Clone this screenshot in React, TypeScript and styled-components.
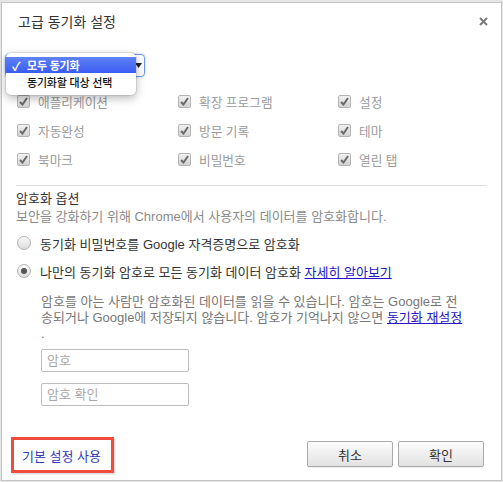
import styled, { createGlobalStyle } from 'styled-components'

const GlobalStyle = createGlobalStyle`
  html, body {
    margin: 0;
    padding: 0;
    background: #e4e4e4;
  }
  body {
    font-family: 'Liberation Sans', 'Noto Sans CJK KR', sans-serif;
    font-size: 13px;
    color: #333;
  }
`

const Frame = styled.div`
  width: 503px;
  height: 482px;
  box-sizing: border-box;
  padding: 2px 1px 1px 1px;
`

const Dialog = styled.div`
  height: 100%;
  box-sizing: border-box;
  background: #fff;
  border: 1px solid #c4c4c4;
  display: flex;
  flex-direction: column;
`

const Header = styled.div`
  display: flex;
  justify-content: space-between;
  align-items: flex-start;
  padding: 10px 12px 0 16px;
`

const Title = styled.h1`
  margin: 0;
  font-size: 14px;
  font-weight: normal;
  line-height: 18px;
  color: #333;
`

const Close = styled.button`
  border: none;
  background: none;
  padding: 0;
  margin-top: 2px;
  width: 12px;
  height: 12px;
  display: flex;
  align-items: center;
  justify-content: center;
`

const SelectRow = styled.div`
  position: relative;
  margin: 23px 0 0 3px;
  width: 140px;
  height: 23px;
`

const SelectBox = styled.div`
  box-sizing: border-box;
  height: 100%;
  border: 1px solid #6d9be6;
  border-radius: 4px;
  box-shadow: 0 0 2px #8fb4ee;
  display: flex;
  justify-content: flex-end;
  align-items: center;
  padding-right: 2px;
`

const Popup = styled.ul`
  position: absolute;
  left: 1px;
  top: -1px;
  width: 130px;
  margin: 0;
  padding: 4px 0;
  list-style: none;
  background: #fff;
  border-radius: 5px;
  box-shadow: 0 3px 10px rgba(0, 0, 0, 0.3), 0 0 0 1px rgba(0, 0, 0, 0.08);
`

const PopupItem = styled.li<{ $active?: boolean }>`
  display: flex;
  align-items: center;
  height: ${p => (p.$active ? 16 : 18)}px;
  padding-left: 6px;
  font-size: 11px;
  letter-spacing: -0.2px;
  font-weight: ${p => (p.$active ? 'bold' : 500)};
  color: ${p => (p.$active ? '#fff' : '#111')};
  background: ${p => (p.$active ? 'linear-gradient(#5f82f7, #3a5bf0)' : 'transparent')};
`

const Tick = styled.span`
  width: 15px;
  font-size: 12px;
`

const CheckGrid = styled.div`
  display: grid;
  grid-template-columns: 161px 160px 1fr;
  grid-auto-rows: 29px;
  margin-top: 10px;
  padding-left: 15px;
`

const CheckItem = styled.label`
  display: flex;
  align-items: center;
  gap: 8px;
  color: #9a9a9a;
  font-size: 12.7px;
`

const CheckBox = styled.span`
  box-sizing: border-box;
  width: 13px;
  height: 13px;
  border: 1px solid #b4b4b4;
  border-radius: 2px;
  background: linear-gradient(#f2f2f2, #d2d2d2);
  display: flex;
  align-items: center;
  justify-content: center;
`

const Divider = styled.hr`
  margin: 11px 14px 0 14px;
  border: none;
  border-top: 1px solid #dcdcdc;
  height: 0;
`

const Section = styled.div`
  padding: 4px 0 0 14px;
`

const Heading = styled.div`
  line-height: 18px;
  color: #333;
`

const Desc = styled.div`
  line-height: 18px;
  color: #8a8a8a;
`

const RadioList = styled.div`
  display: flex;
  flex-direction: column;
  gap: 2px;
  margin-top: 4px;
`

const RadioRow = styled.label`
  display: flex;
  align-items: center;
  gap: 9px;
  height: 26px;
  padding-left: 1px;
  color: #333;
`

const RadioDot = styled.span<{ $on?: boolean }>`
  box-sizing: border-box;
  width: 14px;
  height: 14px;
  border-radius: 50%;
  border: 1px solid #b2b2b2;
  background: linear-gradient(#fafafa, #dcdcdc);
  display: flex;
  align-items: center;
  justify-content: center;

  &::after {
    content: '';
    display: ${p => (p.$on ? 'block' : 'none')};
    width: 6px;
    height: 6px;
    border-radius: 50%;
    background: #555;
  }
`

const Link = styled.a`
  color: #2416c8;
  text-decoration: underline;
  cursor: pointer;
`

const Nested = styled.div`
  padding-left: 25px;
`

const Paragraph = styled.p`
  margin: 10px 0 0;
  line-height: 16px;
  color: #777;
`

const Field = styled.input`
  display: block;
  box-sizing: border-box;
  width: 148px;
  height: 23px;
  margin-top: 11px;
  padding: 0 5px;
  border: 1px solid #bdbdbd;
  border-radius: 2px;
  font: inherit;
  color: #333;

  &:first-of-type {
    margin-top: 7px;
  }

  &::placeholder {
    color: #a8a8a8;
  }
`

const Footer = styled.div`
  margin-top: auto;
  display: flex;
  justify-content: space-between;
  align-items: center;
  padding: 0 17px 9px 9px;
`

const DefaultsLink = styled.a`
  box-sizing: border-box;
  width: 103px;
  height: 36px;
  display: flex;
  align-items: center;
  padding-left: 8px;
  border: 3px solid #f04b3c;
  box-shadow: 1px 1px 2px rgba(0, 0, 0, 0.2);
  color: #2f39b6;
  margin-bottom: -2px;
`

const Buttons = styled.div`
  display: flex;
  gap: 5px;
`

const Button = styled.button`
  width: 86px;
  height: 26px;
  border: 1px solid #a9a9a9;
  border-radius: 2px;
  background: linear-gradient(#fcfcfc, #e2e2e2);
  box-shadow: 0 1px 0 rgba(0, 0, 0, 0.06);
  font: inherit;
  color: #333;
`

const checks = [
  '애플리케이션', '확장 프로그램', '설정',
  '자동완성', '방문 기록', '테마',
  '북마크', '비밀번호', '열린 탭'
]

function CheckIcon () {
  return (
    <svg width="9" height="9" viewBox="0 0 9 9">
      <path d="M1 5 L3.5 7.5 L8 1" fill="none" stroke="#6a6a6a" strokeWidth="2" />
    </svg>
  )
}

export default function App () {
  return (
    <>
      <GlobalStyle />
      <Frame>
        <Dialog>
          <Header>
            <Title>고급 동기화 설정</Title>
            <Close aria-label="닫기">
              <svg width="9" height="9" viewBox="0 0 9 9">
                <path d="M1 1 L8 8 M8 1 L1 8" stroke="#7a7a7a" strokeWidth="2" />
              </svg>
            </Close>
          </Header>

          <SelectRow>
            <SelectBox>
              <svg width="7" height="5" viewBox="0 0 7 5">
                <path d="M0 0 H7 L3.5 5 Z" fill="#222" />
              </svg>
            </SelectBox>
            <Popup>
              <PopupItem $active><Tick>✓</Tick>모두 동기화</PopupItem>
              <PopupItem><Tick />동기화할 대상 선택</PopupItem>
            </Popup>
          </SelectRow>

          <CheckGrid>
            {checks.map(c => (
              <CheckItem key={c}>
                <CheckBox><CheckIcon /></CheckBox>
                {c}
              </CheckItem>
            ))}
          </CheckGrid>

          <Divider />

          <Section>
            <Heading>암호화 옵션</Heading>
            <Desc>보안을 강화하기 위해 Chrome에서 사용자의 데이터를 암호화합니다.</Desc>
            <RadioList>
              <RadioRow>
                <RadioDot />
                동기화 비밀번호를 Google 자격증명으로 암호화
              </RadioRow>
              <RadioRow>
                <RadioDot $on />
                <span>나만의 동기화 암호로 모든 동기화 데이터 암호화 <Link>자세히 알아보기</Link></span>
              </RadioRow>
            </RadioList>
            <Nested>
              <Paragraph>
                암호를 아는 사람만 암호화된 데이터를 읽을 수 있습니다. 암호는 Google로 전<br />
                송되거나 Google에 저장되지 않습니다. 암호가 기억나지 않으면 <Link>동기화 재설정</Link><br />
                .
              </Paragraph>
              <Field placeholder="암호" />
              <Field placeholder="암호 확인" />
            </Nested>
          </Section>

          <Footer>
            <DefaultsLink>기본 설정 사용</DefaultsLink>
            <Buttons>
              <Button>취소</Button>
              <Button>확인</Button>
            </Buttons>
          </Footer>
        </Dialog>
      </Frame>
    </>
  )
}
